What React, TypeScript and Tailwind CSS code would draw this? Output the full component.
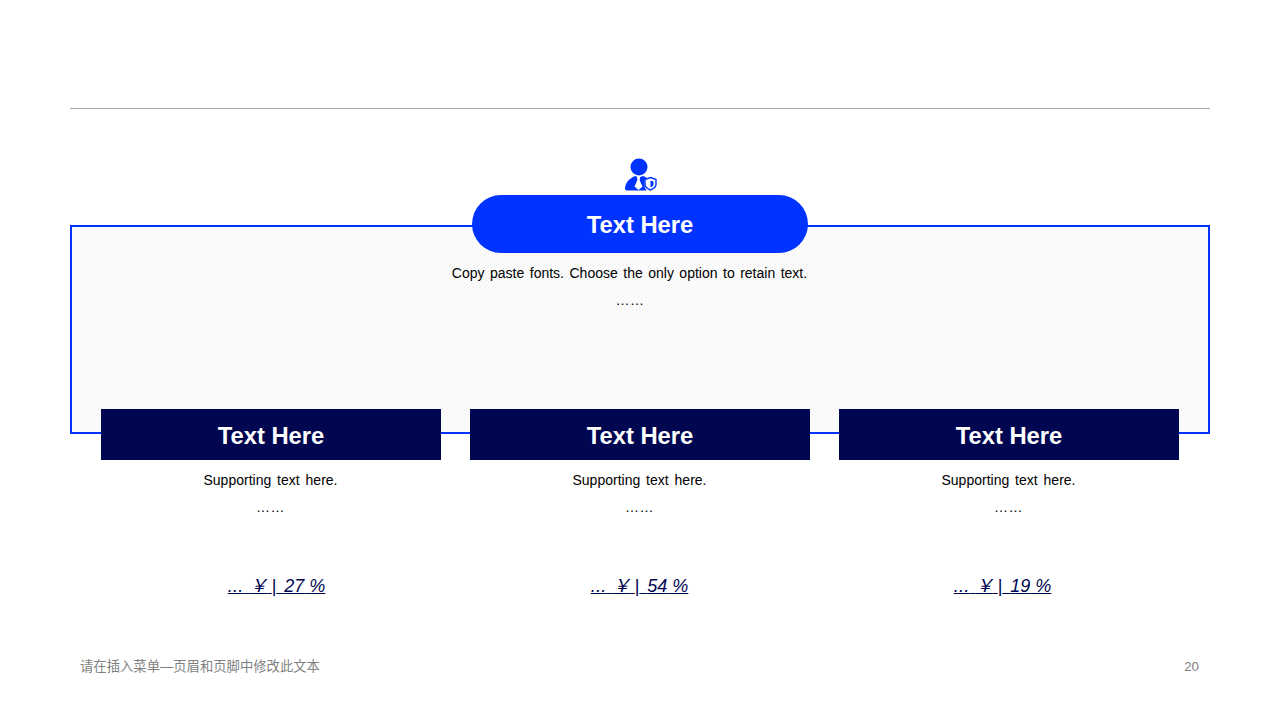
import React from 'react';

const columns = [
  { title: 'Text Here', share: '27', shift: 'pl-[11px]' },
  { title: 'Text Here', share: '54', shift: 'pr-[1px]' },
  { title: 'Text Here', share: '19', shift: 'pr-[13px]' },
];

const UserShield = () => (
  <svg width="34" height="34" viewBox="0 0 34 34" className="block">
    <ellipse cx="15" cy="9" rx="8.500" ry="8.500" fill="#0033ff" />
    <path d="M1 29.500c1-5 4-9 10-11.500l4 1.500 4-1.500c2 .8 3.500 1.500 4.500 2.500l-3 1.500v5.500c0 2 1 4 2.500 5H3c-1.500 0-2.300-1-2-3z" fill="#0033ff" />
    <path d="M13 19h3.200l-.6 3 2.900 6.500-4 3.500-4-3.500 2.900-6.500z" fill="#fff" />
    <path d="M26.500 19.500l5.500 2v4.800c0 2.700-2.300 4.500-5.500 5.700-3.200-1.200-5.500-3-5.500-5.700v-4.800z" fill="none" stroke="#0033ff" strokeWidth="1.400" />
    <path d="M26.500 22.500l3 1v2.800c0 1.500-1.200 2.500-3 3.200z" fill="#0033ff" />
  </svg>
);

const App = () => {
  return (
    <div className="w-[1280px] h-[720px] bg-white overflow-hidden flex flex-col font-['Liberation_Sans','Noto_Sans_CJK_SC',sans-serif]">
      <div className="mx-[70px] mt-[108px] h-px bg-[#a6a6a6]" />

      <div className="flex justify-center mt-[49px] pl-px">
        <UserShield />
      </div>

      {/* Framed panel, pill sits over its top border */}
      <div className="mx-[70px] mt-[33px] h-[209px] border-2 border-[#0033ff] flex flex-col items-center bg-[repeating-linear-gradient(135deg,#f5f5f5_0px,#f5f5f5_1.414px,#ffffff_1.414px,#ffffff_2.828px)]">
        <div className="-mt-[32px] w-[336px] h-[58px] shrink-0 rounded-[29px] bg-[#0033ff] flex items-center justify-center pt-[2px] text-white font-bold text-[23.8px]">
          Text Here
        </div>
        <p className="mt-[10px] pr-[21px] text-[14px] leading-[20px] text-black [word-spacing:1.6px]">
          Copy paste fonts. Choose the only option to retain text.
        </p>
        <p className="mt-[7px] pr-[20px] text-[14px] leading-[20px] text-black tracking-[0.4px]">……</p>
      </div>

      <div className="-mt-[25px] mx-[101px] grid grid-cols-3 gap-[29px]">
        {columns.map((col) => (
          <div key={col.share} className="flex flex-col items-center">
            <div className="w-full h-[51px] pt-[3px] bg-[#000650] flex items-center justify-center text-white font-bold text-[23.8px]">
              {col.title}
            </div>
            <p className="mt-[10px] pr-px text-[14px] leading-[20px] text-black [word-spacing:2px]">Supporting text here.</p>
            <p className="mt-[7px] pr-px text-[14px] leading-[20px] text-black tracking-[0.4px]">……</p>
            <p className={`mt-[56px] ${col.shift} text-[18px] leading-[26px] italic underline text-[#000650] whitespace-pre`}>
              <span className="tracking-[0.3px]">...</span>
              <span className="tracking-[-2px]">{'  '}</span>
              ￥
              <span className="tracking-[-1px]"> </span>
              |
              <span className="tracking-[3px]"> </span>
              {col.share} %
            </p>
          </div>
        ))}
      </div>

      <div className="mt-[58px] mx-[80px] flex items-center justify-between text-[13.330px] leading-[20px] text-[#7f7f7f]">
        <span>请在插入菜单—页眉和页脚中修改此文本</span>
        <span className="pr-px">20</span>
      </div>
    </div>
  );
};

export default App;
